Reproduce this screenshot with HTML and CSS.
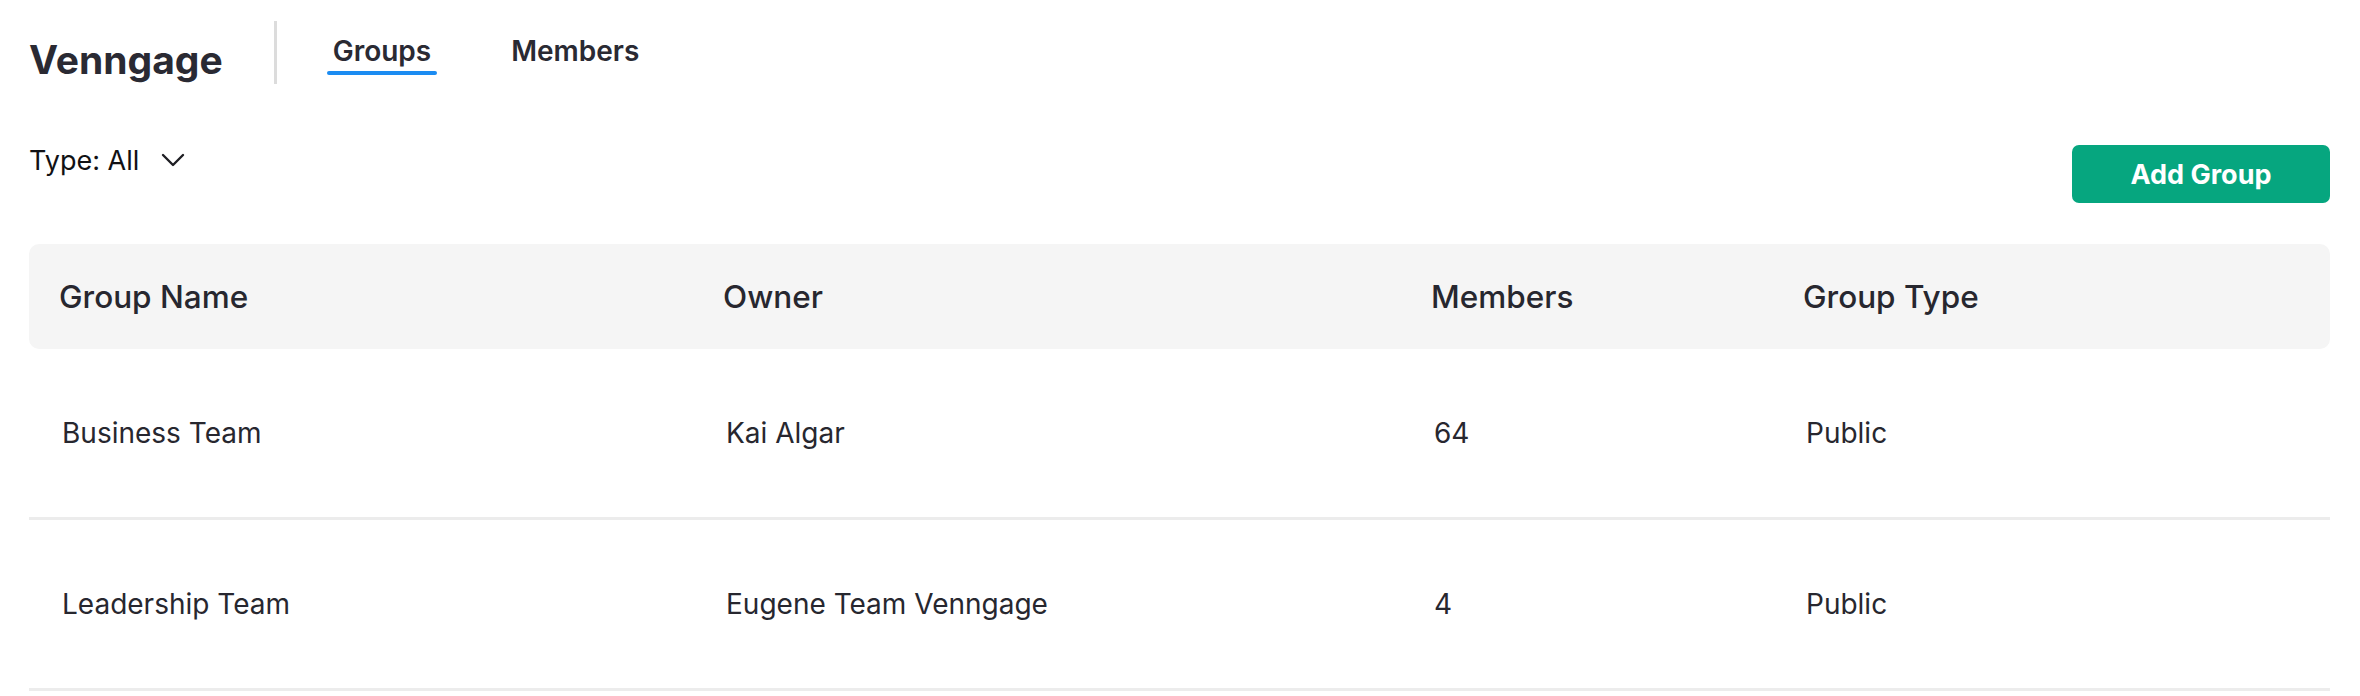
FILE: index.html
```html
<!DOCTYPE html>
<html lang="en">
<head>
<meta charset="utf-8">
<title>Venngage Groups</title>
<link rel="stylesheet" href="styles.css">
</head>
<body>
<div class="page">
  <header class="topbar">
    <div class="brand">Venngage</div>
    <div class="divider"></div>
    <nav class="tabs">
      <a class="tab active">Groups<span class="underline"></span></a>
      <a class="tab">Members<span class="underline"></span></a>
    </nav>
  </header>

  <div class="toolbar">
    <div class="filter">
      <span class="filter-label">Type: All</span>
      <svg class="chevron" viewBox="0 0 24 14" width="24" height="14" aria-hidden="true">
        <path d="M2 2 L12 12 L22 2" fill="none" stroke="#1f1f24" stroke-width="2.4" stroke-linecap="round" stroke-linejoin="round"/>
      </svg>
    </div>
    <button class="add-btn">Add Group</button>
  </div>

  <div class="table">
    <div class="row head">
      <div class="cell">Group Name</div>
      <div class="cell">Owner</div>
      <div class="cell">Members</div>
      <div class="cell">Group Type</div>
    </div>
    <div class="row body">
      <div class="cell">Business Team</div>
      <div class="cell">Kai Algar</div>
      <div class="cell">64</div>
      <div class="cell">Public</div>
    </div>
    <div class="row body">
      <div class="cell">Leadership Team</div>
      <div class="cell">Eugene Team Venngage</div>
      <div class="cell">4</div>
      <div class="cell">Public</div>
    </div>
  </div>
</div>
</body>
</html>
```

FILE: styles.css
```css
* { box-sizing: border-box; }

html, body {
  margin: 0;
  padding: 0;
  background: #ffffff;
}

body {
  font-family: Inter, "Noto Sans", "Liberation Sans", sans-serif;
  color: #282830;
}

.page {
  padding: 0 30px 0 29px;
}

.topbar {
  display: flex;
  align-items: flex-start;
  padding-top: 21px;
  height: 84px;
}

.brand {
  align-self: flex-end;
  font-size: 39px;
  line-height: 48px;
  font-weight: 700;
  color: #2a2a33;
}

.divider {
  width: 3px;
  height: 63px;
  background: #dcdcdc;
  margin-left: 51px;
  margin-right: 56px;
}

.tabs {
  display: flex;
  gap: 80px;
  margin-top: 13px;
}

.tab {
  display: flex;
  flex-direction: column;
  align-items: stretch;
  font-size: 28px;
  line-height: 34px;
  font-weight: 600;
  color: #2a2a33;
  cursor: pointer;
}

.tab .underline {
  display: block;
  height: 4px;
  margin: 3px -6px 0;
  border-radius: 3px;
  background: transparent;
}

.tab.active .underline {
  background: #1b8cf2;
}

.toolbar {
  display: flex;
  justify-content: space-between;
  align-items: flex-start;
  margin-top: 61px;
}

.filter {
  display: flex;
  align-items: center;
  gap: 22px;
  height: 32px;
}

.filter-label {
  font-size: 27px;
  line-height: 32px;
  font-weight: 400;
  color: #111114;
}

.chevron {
  display: block;
  margin-top: -2px;
}

.add-btn {
  width: 258px;
  height: 58px;
  border: none;
  border-radius: 7px;
  background: #06a67f;
  color: #ffffff;
  font-family: Inter, "Noto Sans", "Liberation Sans", sans-serif;
  font-size: 27px;
  font-weight: 700;
  cursor: pointer;
}

.table {
  margin-top: 41px;
}

.row {
  display: grid;
  grid-template-columns: 664px 708px 372px 1fr;
  align-items: center;
}

.row.head {
  height: 105px;
  background: #f5f5f5;
  border-radius: 10px;
}

.row.head .cell {
  padding-left: 30px;
  font-size: 31.5px;
  font-weight: 500;
  color: #27272f;
}

.row.body {
  height: 171px;
  border-bottom: 3px solid #ececec;
}

.row.body .cell {
  padding-left: 33px;
  font-size: 28px;
  font-weight: 400;
  color: #27272f;
}
```
